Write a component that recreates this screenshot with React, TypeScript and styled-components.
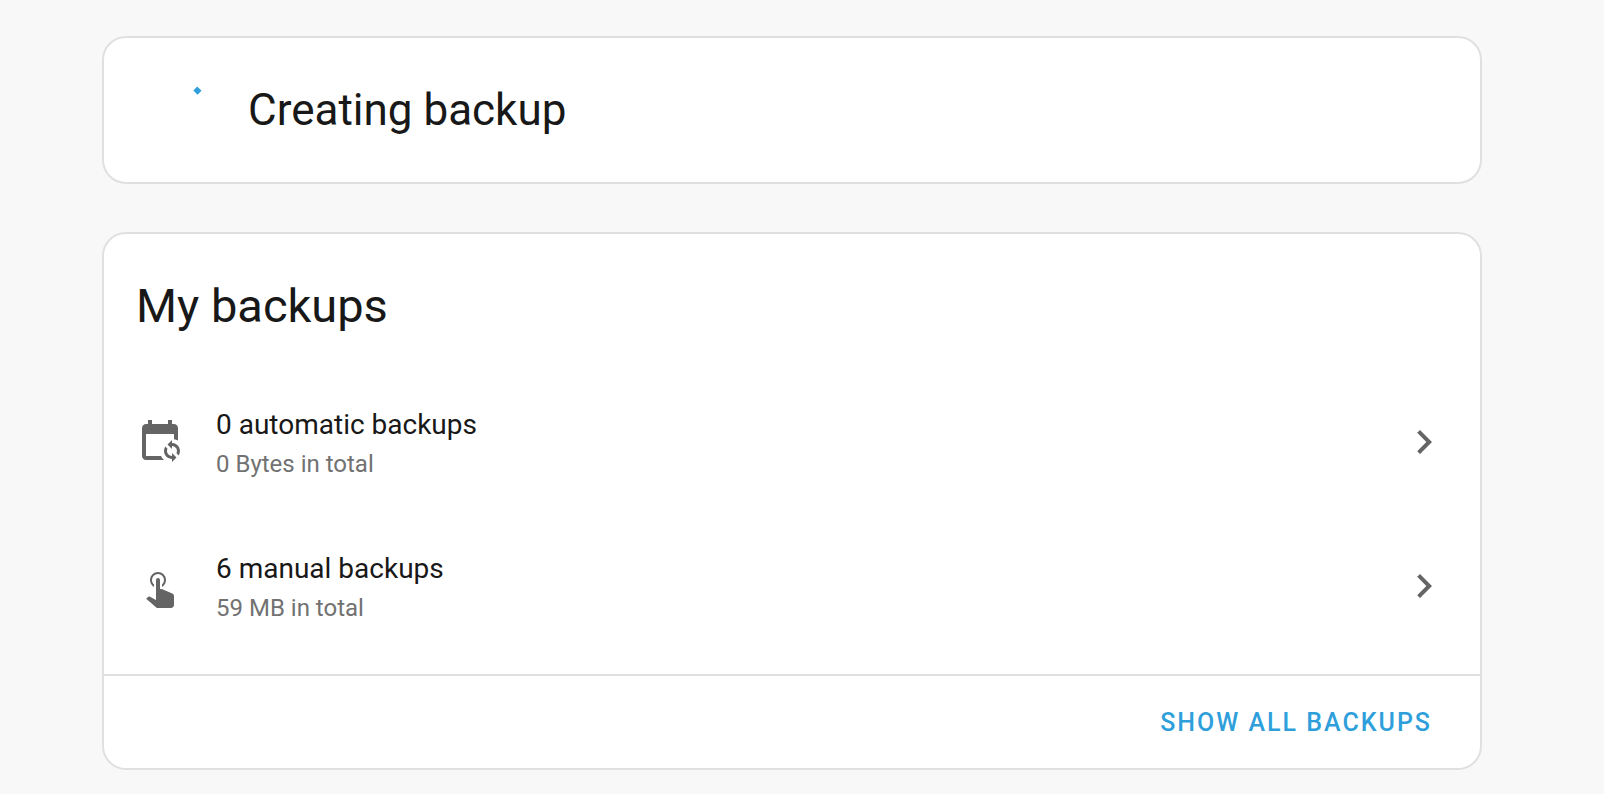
import React from "react";
import styled, { createGlobalStyle } from "styled-components";

const GlobalStyle = createGlobalStyle`
  *, *::before, *::after { box-sizing: border-box; }
  body {
    margin: 0;
    background: #f8f8f8;
    color: #181818;
    font-family: Roboto, "Noto Sans", sans-serif;
    -webkit-font-smoothing: antialiased;
  }
`;

const Page = styled.main`
  display: flex;
  flex-direction: column;
  gap: 48px;
  padding: 36px 122px 24px 102px;
`;

const Card = styled.section`
  display: flex;
  flex-direction: column;
  overflow: hidden;
  background: #fff;
  border: 2px solid #e0e0e0;
  border-radius: 24px;
`;

const ProgressBody = styled.div`
  display: flex;
  align-items: center;
  gap: 40px;
  padding: 40px 48px;
`;

const Spinner = styled.svg`
  flex: none;
  width: 56px;
  height: 64px;
`;

const ProgressTitle = styled.h1`
  margin: 0;
  font-size: 44px;
  line-height: 64px;
  font-weight: 400;
`;

const CardTitle = styled.h2`
  margin: 0;
  padding: 40px 32px 32px;
  font-size: 47px;
  line-height: 64px;
  font-weight: 400;
`;

const BackupList = styled.ul`
  margin: 0;
  padding: 0 0 16px;
  list-style: none;
`;

const BackupRow = styled.button`
  display: flex;
  align-items: center;
  gap: 32px;
  width: 100%;
  height: 144px;
  padding: 0 32px;
  border: 0;
  background: none;
  color: inherit;
  font: inherit;
  text-align: left;
  cursor: pointer;
`;

const Icon = styled.svg`
  flex: none;
  width: 48px;
  height: 48px;
  fill: #646464;
`;

const RowText = styled.span`
  display: flex;
  flex: 1;
  flex-direction: column;
`;

const Headline = styled.span`
  font-size: 28px;
  line-height: 44px;
`;

const Supporting = styled.span`
  color: #727272;
  font-size: 24px;
  line-height: 34px;
`;

const CardActions = styled.footer`
  display: flex;
  justify-content: flex-end;
  padding: 10px 32px;
  border-top: 2px solid #e0e0e0;
`;

const TextButton = styled.button`
  height: 72px;
  padding: 0 16px;
  border: 0;
  background: none;
  color: #2f9fdb;
  font-family: inherit;
  font-size: 25px;
  font-weight: 500;
  letter-spacing: 2px;
  text-transform: uppercase;
  cursor: pointer;
`;

const icons = {
  calendarSync:
    "M18 11V12.5C21.19 12.5 23.09 16.05 21.33 18.71L20.24 17.62C21.06 15.96 19.85 14 18 14V15.5L15.75 13.25L18 11M18 22V20.5C14.81 20.5 12.91 16.95 14.67 14.29L15.76 15.38C14.94 17.04 16.15 19 18 19V17.5L20.25 19.75L18 22M19 3H18V1H16V3H8V1H6V3H5C3.9 3 3 3.9 3 5V19C3 20.1 3.9 21 5 21H14C13.36 20.45 12.86 19.77 12.5 19H5V8H19V10.59C19.71 10.7 20.39 10.94 21 11.31V5C21 3.9 20.1 3 19 3Z",
  gestureTap:
    "M10 9A1 1 0 0 1 11 8A1 1 0 0 1 12 9V13.47L13.21 13.6L18.15 15.79C18.68 16.03 19 16.56 19 17.14V21.5C18.97 22.32 18.32 22.97 17.5 23H11C10.62 23 10.26 22.85 10 22.57L5.1 18.37L5.84 17.6C6.03 17.39 6.3 17.28 6.58 17.28H6.8L10 19V9M11 5A4 4 0 0 1 15 9C15 10.5 14.2 11.77 13 12.46V11.24C13.61 10.69 14 9.89 14 9A3 3 0 0 0 11 6A3 3 0 0 0 8 9C8 9.89 8.39 10.69 9 11.24V12.46C7.8 11.77 7 10.5 7 9A4 4 0 0 1 11 5Z",
  chevronRight:
    "M8.59 16.58L13.17 12L8.59 7.41L10 6L16 12L10 18L8.59 16.58Z",
};

const backups = [
  { icon: icons.calendarSync, title: "0 automatic backups", size: "0 Bytes in total" },
  { icon: icons.gestureTap, title: "6 manual backups", size: "59 MB in total" },
];

export default function App() {
  return (
    <>
      <GlobalStyle />
      <Page>
        <Card>
          <ProgressBody>
            <Spinner viewBox="0 0 56 64" role="img" aria-label="In progress">
              <path
                d="M43.3 10.5L47.5 14.7"
                stroke="#2f9fdb"
                strokeWidth="5.6"
                fill="none"
              />
            </Spinner>
            <ProgressTitle>Creating backup</ProgressTitle>
          </ProgressBody>
        </Card>
        <Card>
          <CardTitle>My backups</CardTitle>
          <BackupList>
            {backups.map((item) => (
              <li key={item.title}>
                <BackupRow type="button">
                  <Icon viewBox="0 0 24 24" aria-hidden="true">
                    <path d={item.icon} />
                  </Icon>
                  <RowText>
                    <Headline>{item.title}</Headline>
                    <Supporting>{item.size}</Supporting>
                  </RowText>
                  <Icon viewBox="0 0 24 24" aria-hidden="true">
                    <path d={icons.chevronRight} />
                  </Icon>
                </BackupRow>
              </li>
            ))}
          </BackupList>
          <CardActions>
            <TextButton type="button">Show all backups</TextButton>
          </CardActions>
        </Card>
      </Page>
    </>
  );
}
